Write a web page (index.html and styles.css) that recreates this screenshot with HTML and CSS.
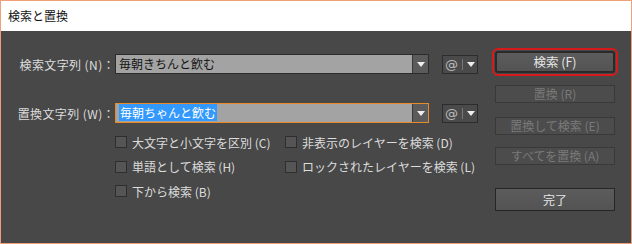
FILE: index.html
```html
<!DOCTYPE html>
<html lang="ja">
<head>
  <meta charset="UTF-8"/>
  <title>検索と置換</title>
  <link rel="stylesheet" href="styles.css">
</head>
<body>
  <div class="window">
    <div class="titlebar">検索と置換</div>

    <div class="content">
      <!-- Fields and options -->
      <div class="main">
        <div class="field">
          <span class="field-label">検索文字列 (N)：</span>
          <div class="combo">
            <span class="combo-text">毎朝きちんと飲む</span>
            <span class="combo-arrow"><span class="tri"></span></span>
          </div>
          <div class="special">
            <span class="at">@</span>
            <span class="sep"></span>
            <span class="tri"></span>
          </div>
        </div>

        <div class="field second">
          <span class="field-label">置換文字列 (W)：</span>
          <div class="combo focused">
            <span class="combo-text"><span class="selected">毎朝ちゃんと飲む</span></span>
            <span class="combo-arrow"><span class="tri"></span></span>
          </div>
          <div class="special">
            <span class="at">@</span>
            <span class="sep"></span>
            <span class="tri"></span>
          </div>
        </div>

        <div class="options">
          <label class="option"><span class="check"></span>大文字と小文字を区別 (C)</label>
          <label class="option"><span class="check"></span>非表示のレイヤーを検索 (D)</label>
          <label class="option"><span class="check"></span>単語として検索 (H)</label>
          <label class="option"><span class="check"></span>ロックされたレイヤーを検索 (L)</label>
          <label class="option"><span class="check"></span>下から検索 (B)</label>
        </div>
      </div>

      <!-- Buttons -->
      <div class="actions">
        <button class="btn primary">検索 (F)</button>
        <button class="btn disabled b-replace">置換 (R)</button>
        <button class="btn disabled b-replace-find">置換して検索 (E)</button>
        <button class="btn disabled b-replace-all">すべてを置換 (A)</button>
        <button class="btn b-done">完了</button>
      </div>
    </div>
  </div>
</body>
</html>
```

FILE: styles.css
```css
* {
  box-sizing: border-box;
}

body {
  margin: 0;
  font-family: "Noto Sans CJK JP", "Noto Sans", sans-serif;
  font-size: 12px;
}

.window {
  width: 632px;
  height: 244px;
  border: 1px solid #f2a077;
  display: flex;
  flex-direction: column;
}

.titlebar {
  height: 30px;
  line-height: 29px;
  padding-left: 7px;
  background: #fff;
  color: #111;
}

.content {
  flex: 1;
  display: flex;
  background: #484848;
  color: #dcdcdc;
}

.main {
  flex: 1;
  padding-top: 23px;
}

.field {
  display: flex;
  align-items: center;
  height: 20px;
}

.field.second {
  margin-top: 29px;
}

.field-label {
  width: 114px;
  text-align: right;
  white-space: nowrap;
  letter-spacing: 0.4px;
}

.combo {
  width: 314px;
  height: 20px;
  display: flex;
  border: 1px solid #2c2c2c;
  background: #a3a3a3;
}

.combo.focused {
  border-color: #e8892a;
}

.combo-text {
  flex: 1;
  padding-left: 3px;
  line-height: 18px;
  color: #151515;
  white-space: nowrap;
}

.selected {
  background: #3399ff;
  color: #fff;
  padding: 0 1px;
  display: inline-block;
  line-height: 17px;
}

.combo-arrow {
  width: 16px;
  display: flex;
  align-items: center;
  justify-content: center;
  background: #5b5b5b;
  border-left: 1px solid #3a3a3a;
}

.tri {
  width: 0;
  height: 0;
  border-left: 4px solid transparent;
  border-right: 4px solid transparent;
  border-top: 5px solid #eee;
}

.special {
  width: 36px;
  height: 19px;
  margin-left: 13px;
  display: flex;
  align-items: center;
  border: 1px solid #2c2c2c;
  background: #4a4a4a;
  padding-left: 2px;
}

.at {
  font-family: "DejaVu Sans", sans-serif;
  font-size: 13px;
  color: #bdbdbd;
  line-height: 17px;
}

.sep {
  width: 1px;
  height: 11px;
  background: #777;
  margin: 0 4px 0 4px;
}

.options {
  margin-top: 7px;
  margin-left: 114px;
  display: grid;
  grid-template-columns: 170px auto;
  grid-auto-rows: 24.5px;
}

.option {
  display: flex;
  align-items: center;
  white-space: nowrap;
}

.check {
  width: 12px;
  height: 12px;
  margin-right: 5px;
  border: 1px solid #2e2e2e;
  background: #555;
}

.actions {
  width: 120px;
  margin-right: 16px;
  padding-top: 20px;
  display: flex;
  flex-direction: column;
}

.btn {
  width: 120px;
  height: 18px;
  padding: 0;
  font-family: inherit;
  font-size: 12px;
  line-height: 16px;
  color: #e6e6e6;
  border: 1px solid #262626;
  background: linear-gradient(#5c5c5c, #535353);
}

.btn.primary {
  height: 22px;
  border-width: 2px;
  border-color: #2a2a2a;
  outline: 2px solid #d41a1a;
  outline-offset: 1px;
  border-radius: 3px;
  font-size: 12.5px;
}

.btn.disabled {
  color: #7a7a7a;
  border-color: #393939;
  background: #4c4c4c;
}

.b-replace {
  margin-top: 12px;
}

.b-replace-find {
  margin-top: 14px;
}

.b-replace-all {
  margin-top: 12px;
}

.b-done {
  height: 23px;
  margin-top: 23px;
}
```
